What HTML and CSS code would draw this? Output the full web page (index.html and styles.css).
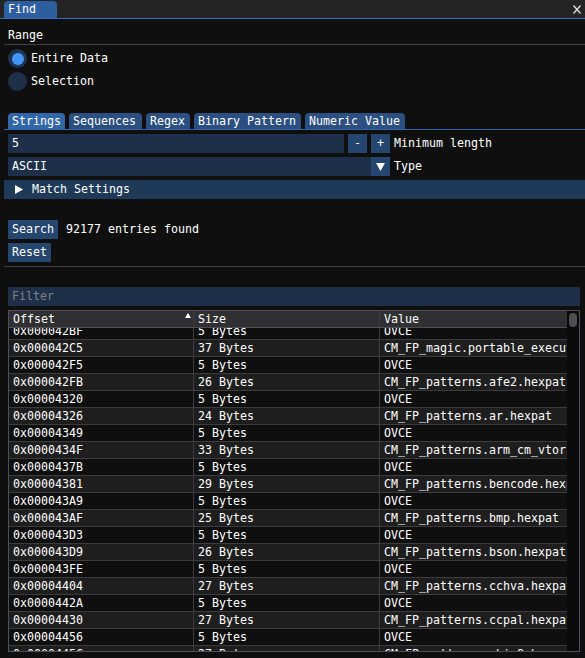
FILE: index.html
```html
<!DOCTYPE html>
<html lang="en">
<head>
  <meta charset="UTF-8">
  <title>Find</title>
  <link rel="stylesheet" href="styles.css">
</head>
<body>

  <header class="titlebar">
    <div class="doc-tab">Find</div>
    <svg class="close" width="8" height="9" viewBox="0 0 8 9">
      <path d="M0.5 0.5 L7.5 8.5 M7.5 0.5 L0.5 8.5" stroke="#e6e6e6" stroke-width="1.2" fill="none"/>
    </svg>
  </header>

  <main class="content">
    <div class="text-line range">Range</div>
    <div class="sep"></div>

    <div class="radio on"><span class="dot"></span>Entire Data</div>
    <div class="radio"><span class="dot"></span>Selection</div>

    <nav class="tabbar">
      <span class="tab active w-strings">Strings</span>
      <span class="tab w-seq">Sequences</span>
      <span class="tab w-regex">Regex</span>
      <span class="tab w-binary">Binary Pattern</span>
      <span class="tab w-numeric">Numeric Value</span>
    </nav>

    <div class="row">
      <div class="frame min-len">5</div>
      <span class="btn sq">-</span>
      <span class="btn sq">+</span>
      <span class="label">Minimum length</span>
    </div>

    <div class="row">
      <div class="combo">
        <div class="frame">ASCII</div>
        <span class="btn sq arrow">
          <svg width="9" height="8" viewBox="0 0 9 8"><path d="M0 0 H9 L4.5 8 Z" fill="#fff"/></svg>
        </span>
      </div>
      <span class="label">Type</span>
    </div>

    <div class="collapse">
      <svg width="8" height="9" viewBox="0 0 8 9"><path d="M0 0 L8 4.5 L0 9 Z" fill="#fff"/></svg>
      <span>Match Settings</span>
    </div>

    <div class="row search-row">
      <span class="btn">Search</span>
      <span class="count">92177 entries found</span>
    </div>
    <div class="row">
      <span class="btn">Reset</span>
    </div>
    <div class="sep sep-lower"></div>

    <div class="frame filter">Filter</div>

    <div class="table">
      <div class="tbl-main">
        <div class="tr th">
          <div class="cell">Offset
            <svg class="sort" width="6" height="5" viewBox="0 0 6 5"><path d="M3 0 L6 5 H0 Z" fill="#fff"/></svg>
          </div>
          <div class="cell">Size</div>
          <div class="cell">Value</div>
        </div>
        <div class="tbl-body">
          <div class="rows" id="rows"></div>
        </div>
      </div>
      <div class="scrollbar"><div class="grab"></div></div>
    </div>
  </main>

  <script>
    const results = [
      ['0x000042BF', 5, 'OVCE'],
      ['0x000042C5', 37, 'CM_FP_magic.portable_executable.hexpat'],
      ['0x000042F5', 5, 'OVCE'],
      ['0x000042FB', 26, 'CM_FP_patterns.afe2.hexpat'],
      ['0x00004320', 5, 'OVCE'],
      ['0x00004326', 24, 'CM_FP_patterns.ar.hexpat'],
      ['0x00004349', 5, 'OVCE'],
      ['0x0000434F', 33, 'CM_FP_patterns.arm_cm_vtor.hexpat'],
      ['0x0000437B', 5, 'OVCE'],
      ['0x00004381', 29, 'CM_FP_patterns.bencode.hexpat'],
      ['0x000043A9', 5, 'OVCE'],
      ['0x000043AF', 25, 'CM_FP_patterns.bmp.hexpat'],
      ['0x000043D3', 5, 'OVCE'],
      ['0x000043D9', 26, 'CM_FP_patterns.bson.hexpat'],
      ['0x000043FE', 5, 'OVCE'],
      ['0x00004404', 27, 'CM_FP_patterns.cchva.hexpat'],
      ['0x0000442A', 5, 'OVCE'],
      ['0x00004430', 27, 'CM_FP_patterns.ccpal.hexpat'],
      ['0x00004456', 5, 'OVCE'],
      ['0x0000445C', 27, 'CM_FP_patterns.chip8.hexpat']
    ];

    const rows = document.getElementById('rows');
    results.forEach((r, i) => {
      const tr = document.createElement('div');
      tr.className = i % 2 ? 'tr alt' : 'tr';
      tr.innerHTML = `<div class="cell">${r[0]}</div><div class="cell">${r[1]} Bytes</div><div class="cell">${r[2]}</div>`;
      rows.appendChild(tr);
    });
  </script>
</body>
</html>
```

FILE: styles.css
```css
body {
  margin: 0;
  width: 585px;
  height: 658px;
  overflow: hidden;
  background: #0f0f0f;
  color: #fff;
  font-family: "DejaVu Sans Mono", monospace;
  font-size: 11.63px;
}

/* dock title strip */
.titlebar {
  display: flex;
  align-items: flex-start;
  height: 18px;
  background: #242424;
  border-bottom: 1px solid #336dc0;
}

.doc-tab {
  margin: 1px 0 0 4px;
  width: 53px;
  height: 17px;
  line-height: 17px;
  padding-left: 4px;
  box-sizing: border-box;
  background: #2d5e9f;
  border-radius: 4px 4px 0 0;
}

.close {
  margin: 5px 4px 0 auto;
}

.content {
  padding-left: 8px;
}

.text-line {
  height: 13px;
  line-height: 13px;
}

.range {
  margin-top: 10px;
}

.sep {
  margin: 2px 0 0 -4px;
  width: 581px;
  height: 1px;
  background: #3e3e46;
}

.sep-lower {
  margin-top: 4px;
}

/* radio buttons */
.radio {
  display: flex;
  align-items: center;
  gap: 4px;
  height: 19px;
  line-height: 19px;
  margin-top: 4px;
}

.dot {
  display: flex;
  align-items: center;
  justify-content: center;
  width: 19px;
  height: 19px;
  border-radius: 50%;
  background: #1d2f49;
}

.radio.on .dot {
  background: #1f3352;
}

.radio.on .dot::after {
  content: "";
  width: 12px;
  height: 12px;
  border-radius: 50%;
  background: #4296fa;
}

/* tab bar */
.tabbar {
  display: flex;
  gap: 4px;
  margin: 22px 0 0 -4px;
  padding-left: 4px;
  width: 581px;
  box-sizing: border-box;
  height: 17px;
  border-bottom: 1px solid #3166a8;
}

.tab {
  padding: 1px 4px 0;
  height: 16px;
  line-height: 15px;
  box-sizing: border-box;
  background: #2a4f80;
  border-radius: 4px 4px 0 0;
}

.tab.active {
  background: #3166a8;
}

.w-strings { width: 57px; }
.w-seq { width: 73px; }
.w-regex { width: 44px; }
.w-binary { width: 107px; }
.w-numeric { width: 100px; }

/* widgets */
.row {
  display: flex;
  gap: 4px;
  height: 19px;
  line-height: 19px;
  margin-top: 4px;
}

.frame {
  height: 19px;
  line-height: 19px;
  padding: 0 4px;
  box-sizing: border-box;
  background: #1d2f49;
}

.min-len {
  width: 336px;
}

.btn {
  padding: 0 4px;
  background: #24466f;
}

.btn.sq {
  width: 19px;
  padding: 0;
  text-align: center;
}

.arrow {
  display: flex;
  align-items: center;
  justify-content: center;
}

.combo {
  display: flex;
  width: 382px;
}

.combo .frame {
  flex: 1;
}

.collapse {
  display: flex;
  align-items: center;
  gap: 9px;
  margin: 4px 0 0 -4px;
  padding-left: 11px;
  width: 581px;
  box-sizing: border-box;
  height: 19px;
  line-height: 19px;
  background: #1f3958;
}

.search-row {
  margin-top: 21px;
  gap: 8px;
}

.filter {
  margin-top: 20px;
  width: 572px;
  color: #808080;
}

/* results table */
.table {
  display: flex;
  margin-top: 4px;
  width: 572px;
  height: 342px;
  box-sizing: border-box;
  border: 1px solid #4f4f59;
}

.tbl-main {
  width: 558px;
}

.tr {
  display: grid;
  grid-template-columns: 185px 186px 187px;
  height: 17px;
  box-sizing: border-box;
  border-bottom: 1px solid #3b3b40;
}

.tr.alt {
  background: #1e1e1e;
}

.cell {
  padding-left: 4px;
  line-height: 16px;
  white-space: nowrap;
  overflow: hidden;
}

.cell:not(:last-child) {
  border-right: 1px solid #3b3b40;
}

.th {
  background: #303033;
  border-bottom-color: #4f4f59;
}

.th .cell:first-child {
  display: flex;
  padding-right: 2px;
}

.sort {
  margin: 2px 0 0 auto;
}

.tbl-body {
  height: 323px;
  overflow: hidden;
}

.rows {
  margin-top: -5px;
}

.scrollbar {
  width: 12px;
  background: #0a0a0a;
}

.grab {
  margin: 2px 0 0 2px;
  width: 8px;
  height: 14px;
  border-radius: 4px;
  background: #4f4f4f;
}
```
